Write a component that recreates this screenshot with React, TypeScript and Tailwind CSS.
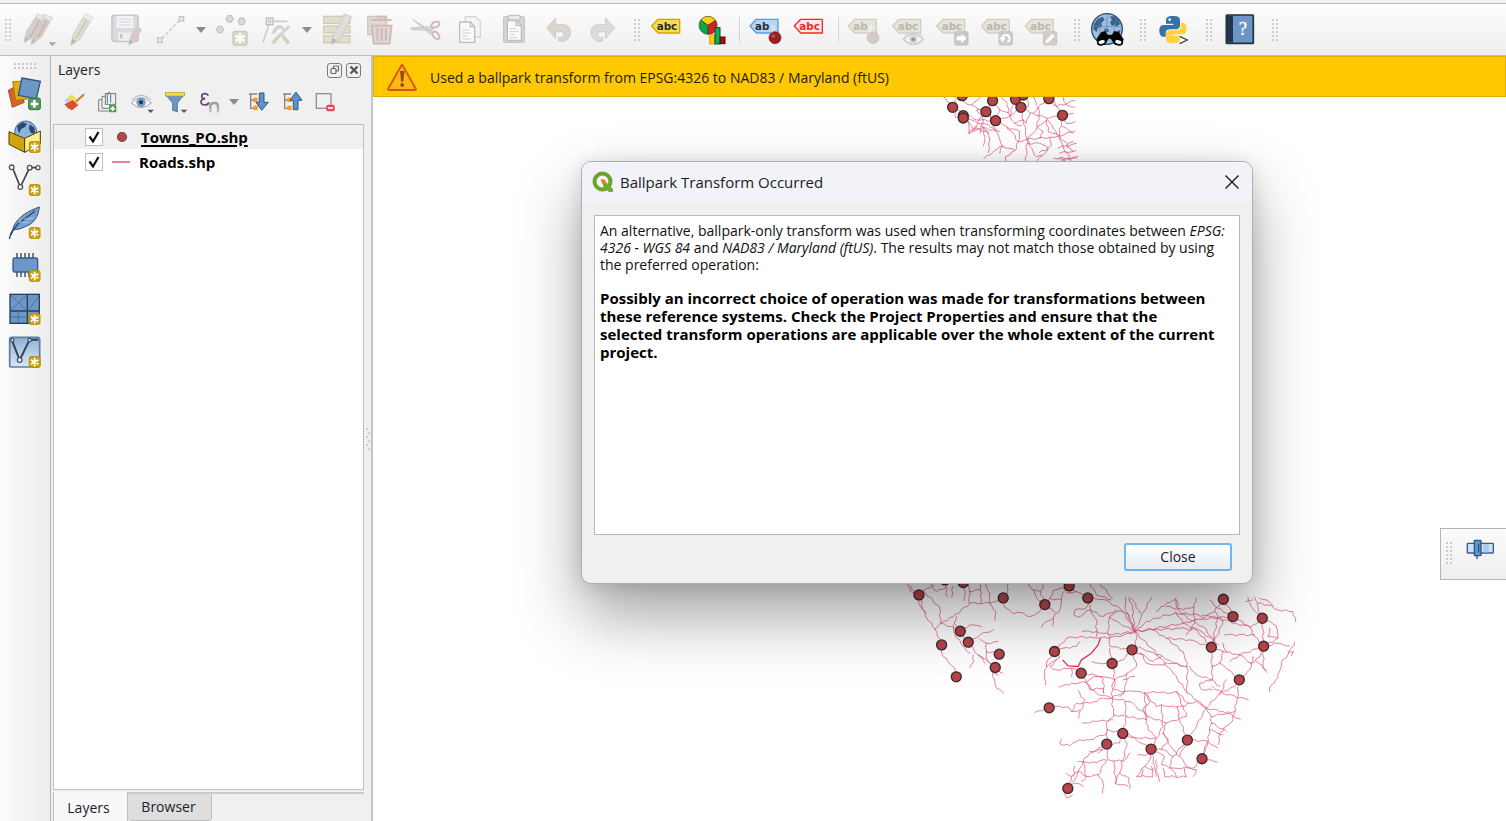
import React from "react";

type IconProps = { box: string; size?: string; children: React.ReactNode };

function Icon({ box, size = "size-9", children }: IconProps) {
  return (
    <svg viewBox={box} className={`${size} shrink-0 overflow-visible`} aria-hidden="true">
      {children}
    </svg>
  );
}

function ToolButton({ label, box, children }: { label: string; box: string; children: React.ReactNode }) {
  return (
    <button type="button" aria-label={label} className="flex h-9 w-11 shrink-0 justify-center">
      <Icon box={box}>{children}</Icon>
    </button>
  );
}

function Arrow({ label, className }: { label: string; className: string }) {
  return (
    <button type="button" aria-label={label} className={`flex shrink-0 items-center justify-center ${className}`}>
      <svg viewBox="0 0 10 6" className="h-1.5 w-2.5" aria-hidden="true">
        <path d="M0 0H10L5 6Z" fill="#8c8c8c" />
      </svg>
    </button>
  );
}

function Grip() {
  return (
    <span className="flex h-9 w-4 shrink-0 items-center justify-center">
      <svg viewBox="0 0 7 24" className="h-6 w-[7px]" aria-hidden="true">
        {[1, 5, 9, 13, 17, 21].map((y) => (
          <g key={y} fill="#cecece">
            <rect x="0" y={y} width="2" height="2" />
            <rect x="4" y={y} width="2" height="2" />
          </g>
        ))}
      </svg>
    </span>
  );
}

function Tag({ x, text = "abc", fill = "#e6e4db", stroke = "#d3d0c2", color = "#bab8ae" }: { x: number; text?: string; fill?: string; stroke?: string; color?: string }) {
  return (
    <g>
      <path d={`M${x} 78L${x + 19} 58H${x + 84}V99H${x + 19}Z`} fill={fill} stroke={stroke} strokeWidth="4" strokeLinejoin="round" />
      <text x={x + 15} y="89" fontSize="31" fontWeight="700" fontFamily="DejaVu Sans, sans-serif" fill={color}>
        {text}
      </text>
    </g>
  );
}

function Star({ x, y }: { x: number; y: number }) {
  return (
    <g transform={`translate(${x} ${y})`}>
      <rect x="2" y="2" width="32" height="32" rx="5" fill="#cfa414" stroke="#b18d0c" strokeWidth="3" />
      <path d="M18 7V29M8.500 12.500L27.500 23.500M27.500 12.500L8.500 23.500" stroke="#fff" strokeWidth="5" strokeLinecap="round" />
    </g>
  );
}

function Toolbar() {
  return (
    <header className="mt-[3px] flex h-[53px] shrink-0 items-start gap-1.5 overflow-hidden border-y border-[#bcbcbc] bg-linear-to-b from-[#fdfdfd] to-[#eeeeee] pt-2">
      <div className="flex shrink-0">
        <Grip />
        <ToolButton label="Current edits" box="60 36 108 108">
          <g stroke="#d6d2cc" strokeWidth="2" strokeLinejoin="round">
            <path d="M72 128L79 94L112 41L134 52L101 110Z" fill="#d8ccc8" />
            <path d="M93 134L99 99L131 42L158 53L124 112Z" fill="#d6cac6" />
            <path d="M112 41L134 52L130 62L106 50ZM131 42L158 53L152 64L126 52Z" fill="#e8e8e8" />
            <path d="M72 128L76 108L88 118ZM93 134L97 114L110 124Z" fill="#bdbdbd" />
            <path d="M118 62L88 115M140 62L112 114" stroke="#c5b5b2" strokeWidth="4" />
          </g>
          <path d="M146 127H169L157 139Z" fill="#a8a8a8" />
        </ToolButton>
        <ToolButton label="Toggle editing" box="192 36 108 108">
          <path d="M213 135L218 108L255 42L278 52L240 118Z" fill="#dfddd2" stroke="#d0cec5" strokeWidth="3" strokeLinejoin="round" />
          <path d="M255 42L278 52L272 62L249 52Z" fill="#ececec" />
          <path d="M260 60L228 115" stroke="#cbc8ba" strokeWidth="5" />
          <path d="M213 135L217 116L229 123Z" fill="#b8b8b8" />
        </ToolButton>
        <ToolButton label="Save layer edits" box="324 36 108 108">
          <rect x="336" y="46" width="78" height="78" rx="7" fill="#d7dbde" stroke="#c6c9cc" strokeWidth="5" />
          <path d="M350 48H400V84H350Z" fill="#f3f3f3" />
          <path d="M356 57H394M356 66H394M356 75H394" stroke="#d5d5d5" strokeWidth="3" />
          <path d="M354 98H394V122H354Z" fill="#efefef" />
          <rect x="360" y="102" width="8" height="14" fill="#c5c8ca" />
          <path d="M386 135L391 112L411 80L425 88L404 124Z" fill="#d9c8c3" stroke="#d2c4c0" strokeWidth="2" />
          <path d="M386 135L390 119L399 127Z" fill="#b5b5b5" />
        </ToolButton>
        <ToolButton label="Digitize with segment" box="456 36 108 108">
          <path d="M486 115L538 62" stroke="#cfcfcf" strokeWidth="5" strokeDasharray="10 6" />
          <rect x="473" y="114" width="13" height="13" fill="#eee" stroke="#c4c4c4" strokeWidth="4" />
          <rect x="538" y="50" width="13" height="13" fill="#eee" stroke="#c4c4c4" strokeWidth="4" />
        </ToolButton>
        <Arrow label="Segment options" className="h-9 w-[18px]" />
        <ToolButton label="Add point feature" box="642 36 108 108">
          <g fill="#d8dbdb" stroke="#c4c6c6" strokeWidth="4">
            <path d="M684 47H694L700 56L694 66H684L678 56Z" />
            <path d="M720 54H730L736 64L730 74H720L714 64Z" />
            <path d="M655 79H665L671 89L665 98H655L649 89Z" />
          </g>
          <rect x="699" y="94" width="42" height="42" rx="6" fill="#dcd8c8" stroke="#cdc9b6" strokeWidth="4" />
          <path d="M720 100V130M706 107L734 123M734 107L706 123" stroke="#fff" strokeWidth="7" />
        </ToolButton>
        <ToolButton label="Vertex tool" box="774 36 108 108">
          <path d="M820 64H862M806 76L789 127" stroke="#cdcdcd" strokeWidth="5" />
          <rect x="799" y="54" width="20" height="20" fill="#eaeaea" stroke="#bdbdbd" strokeWidth="4" />
          <circle cx="809" cy="64" r="4" fill="none" stroke="#bdbdbd" strokeWidth="3" />
          <path d="M818 100L832 82Q842 76 850 88" fill="none" stroke="#d3d3d3" strokeWidth="10" />
          <path d="M868 78L836 110M842 98L866 130" stroke="#d3d3d3" strokeWidth="9" />
          <path d="M836 109L818 130M850 112L866 130" stroke="#d6d0bc" strokeWidth="11" />
        </ToolButton>
        <Arrow label="Vertex options" className="h-9 w-[17px]" />
        <ToolButton label="Modify attributes" box="-6 36 108 108">
          <g fill="#e0decf" stroke="#cfccb9" strokeWidth="4">
            <rect x="8" y="49" width="79" height="21" />
            <rect x="8" y="78" width="79" height="21" />
            <rect x="8" y="107" width="79" height="21" />
          </g>
          <path d="M31 133L37 106L70 42L92 52L56 118Z" fill="#e1dcd8" stroke="#cfcbc7" strokeWidth="3" />
          <path d="M31 133L35 115L47 121Z" fill="#b5b5b5" />
        </ToolButton>
        <ToolButton label="Delete selected" box="126 36 108 108">
          <path d="M140 49H197V104H140Z" fill="#dddbcd" stroke="#cdcab8" strokeWidth="4" />
          <path d="M150 60H212M172 58V50H192V58" stroke="#cfbdbd" strokeWidth="6" fill="none" />
          <path d="M152 77H212L206 131H158Z" fill="#e3d4d4" stroke="#cdb8b8" strokeWidth="5" />
          <path d="M169 84V122M182 84V122M195 84V122" stroke="#cdbcbc" strokeWidth="6" />
        </ToolButton>
        <ToolButton label="Cut features" box="258 36 108 108">
          <path d="M275 58L336 98L330 104Z M270 84L338 80L334 90L272 89Z" fill="#dcdcdc" stroke="#c6c6c6" strokeWidth="3" strokeLinejoin="round" />
          <ellipse cx="343" cy="74" rx="13" ry="8" fill="none" stroke="#cfb9bb" strokeWidth="6" transform="rotate(-25 343 74)" />
          <ellipse cx="345" cy="106" rx="13" ry="8" fill="none" stroke="#cfb9bb" strokeWidth="6" transform="rotate(50 345 106)" />
        </ToolButton>
        <ToolButton label="Copy features" box="390 36 108 108">
          <path d="M433 50H464L478 64V111H433Z" fill="#f4f4f4" stroke="#d5d5d5" strokeWidth="4" />
          <path d="M416 66H448L461 80V127H416Z" fill="#fafafa" stroke="#bdbdbd" strokeWidth="4" />
          <path d="M448 66V80H461" fill="none" stroke="#bdbdbd" strokeWidth="4" />
          <path d="M424 90H444M424 99H452M424 108H440M424 117H450" stroke="#d0d0d0" strokeWidth="3" />
        </ToolButton>
        <ToolButton label="Paste features" box="522 36 108 108">
          <rect x="548" y="50" width="62" height="77" rx="5" fill="#dad7d0" stroke="#c8c5be" strokeWidth="4" />
          <path d="M559 62H586L601 76V121H559Z" fill="#fafafa" stroke="#bdbdbd" strokeWidth="4" />
          <rect x="562" y="46" width="36" height="14" rx="4" fill="#e9e9e9" stroke="#c2c2c2" strokeWidth="4" />
          <path d="M586 64V76H600" fill="none" stroke="#bdbdbd" strokeWidth="4" />
          <path d="M566 86H584M566 95H593M566 104H582M566 113H590" stroke="#d0d0d0" strokeWidth="3" />
        </ToolButton>
        <ToolButton label="Undo" box="654 36 108 108">
          <path d="M677 84L704 54V74H725C742 74 748 85 748 97C748 112 739 122 724 124L714 123L712 112C724 113 728 109 728 102C728 96 723 95 717 95H704V115Z" fill="#dcd5cf" stroke="#d2cac4" strokeWidth="3" />
        </ToolButton>
        <ToolButton label="Redo" box="786 36 108 108">
          <path d="M881 84L854 54V74H833C816 74 810 85 810 97C810 112 819 122 834 124L844 123L846 112C834 113 830 109 830 102C830 96 835 95 841 95H854V115Z" fill="#d9dcd9" stroke="#cacfcb" strokeWidth="3" />
        </ToolButton>
      </div>

      <div className="flex shrink-0">
        <Grip />
        <ToolButton label="Layer labeling options" box="27 36 108 108">
          <Tag x={35} fill="#f7dd4d" stroke="#cfa600" color="#2c2c2c" />
        </ToolButton>
        <ToolButton label="Layer diagram options" box="159 36 108 108">
          <circle cx="204" cy="76" r="27" fill="#0ca653" />
          <path d="M204 76L182 60A27 27 0 0 1 227 61Z" fill="#ffd018" />
          <path d="M204 76L227 61A27 27 0 0 1 204 103Z" fill="#d8202a" />
          <path d="M204 103V76L182 60M204 76L227 61" stroke="#4e3c12" strokeWidth="3" fill="none" />
          <circle cx="204" cy="76" r="27" fill="none" stroke="#3f4a1c" strokeWidth="2" />
          <rect x="209" y="104" width="15" height="28" fill="#ffc60b" stroke="#c98e00" strokeWidth="2" />
          <rect x="225" y="83" width="15" height="49" fill="#12ac54" stroke="#054d24" strokeWidth="3" />
          <rect x="241" y="111" width="14" height="20" fill="#a80c14" stroke="#59060a" strokeWidth="3" />
        </ToolButton>
        <span className="flex h-9 w-3 items-center justify-center">
          <span className="h-[26px] w-px bg-[#d4d4d4]" />
        </span>
        <ToolButton label="Pinned labels" box="327 36 108 108">
          <Tag x={330} text="ab" fill="#b5d5fb" stroke="#5b9be8" color="#2c2c2c" />
          <path d="M399 80V100" stroke="#dcdcdc" strokeWidth="12" strokeLinecap="round" />
          <circle cx="405" cy="113" r="18" fill="#9d1c20" stroke="#7d1518" strokeWidth="2" />
          <circle cx="400" cy="108" r="6" fill="#b84a4a" />
        </ToolButton>
        <ToolButton label="Unplaced labels" box="459 36 108 108">
          <Tag x={463} fill="#fdeaea" stroke="#fb2426" color="#fb2426" />
        </ToolButton>
        <span className="flex h-9 w-2.5 items-center justify-center">
          <span className="h-[26px] w-px bg-[#d4d4d4]" />
        </span>
        <ToolButton label="Pin labels" box="621 36 108 108">
          <Tag x={625} text="ab" />
          <path d="M692 80V100" stroke="#efefef" strokeWidth="11" strokeLinecap="round" />
          <circle cx="699" cy="113" r="18" fill="#d5c9c9" stroke="#cbbfbf" strokeWidth="2" />
        </ToolButton>
        <ToolButton label="Show or hide labels" box="753 36 108 108">
          <Tag x={758} />
          <path d="M790 118Q820 88 850 118Q820 148 790 118Z" fill="#f4f4f4" stroke="#c5c5c5" strokeWidth="4" />
          <circle cx="820" cy="118" r="11" fill="#c3cacf" />
          <circle cx="820" cy="118" r="5" fill="#909090" />
          <path d="M792 108Q820 86 848 108" fill="none" stroke="#cfcfcf" strokeWidth="3" />
        </ToolButton>
        <ToolButton label="Move label" box="885 36 108 108">
          <Tag x={890} />
          <rect x="944" y="95" width="40" height="40" rx="5" fill="#c6c9c9" stroke="#bec1c1" strokeWidth="3" />
          <path d="M950 109H964V101L980 115L964 129V121H950Z" fill="#fff" />
        </ToolButton>
        <ToolButton label="Rotate label" box="57 36 108 108">
          <Tag x={64} />
          <rect x="117" y="95" width="40" height="40" rx="5" fill="#cbcdcd" stroke="#c3c5c5" strokeWidth="3" />
          <path d="M127 115A11 11 0 1 1 142 126" fill="none" stroke="#fff" strokeWidth="6" />
          <path d="M119 112L137 114L127 128Z" fill="#fff" />
        </ToolButton>
        <ToolButton label="Change label properties" box="189 36 108 108">
          <Tag x={196} />
          <rect x="250" y="95" width="40" height="40" rx="5" fill="#d0cec5" stroke="#c8c6bc" strokeWidth="3" />
          <path d="M256 130L259 120L276 101L284 108L267 126Z" fill="#fff" />
        </ToolButton>
      </div>

      <div className="flex shrink-0">
        <Grip />
        <ToolButton label="Search locations" box="387 36 108 108">
          <circle cx="441" cy="87" r="46" fill="#9fbfe2" stroke="#2b4a69" strokeWidth="4" />
          <path d="M402 72L412 58L428 50L434 60L424 68L426 80L414 84L410 96L400 88ZM448 50L462 48L476 58L480 72L470 80L464 74L456 78L450 68L456 58ZM432 86L444 86L448 94L436 98ZM470 92L482 90L478 102Z" fill="#3a6289" />
          <path d="M396 80H486M441 42V120M410 54Q430 85 412 118M472 54Q454 85 470 118" fill="none" stroke="#5a83aa" strokeWidth="2" />
          <path d="M409 118L424 96L436 93L442 104H456L462 93L476 96L491 118L486 134H464L452 116H446L434 134H414Z" fill="#050505" />
          <ellipse cx="425" cy="126" rx="12" ry="8" fill="#fff" stroke="#050505" strokeWidth="5" transform="rotate(-12 425 126)" />
          <ellipse cx="475" cy="126" rx="12" ry="8" fill="#fff" stroke="#050505" strokeWidth="5" transform="rotate(12 475 126)" />
        </ToolButton>
      </div>
      <div className="flex shrink-0">
        <Grip />
        <ToolButton label="Python console" box="585 36 108 108">
          <path d="M638 48C622 48 618 54 618 62V71H640V75H610C601 75 598 84 598 92C598 102 602 110 611 110H617V99C617 91 623 88 630 88H648C656 88 660 83 660 76V62C660 52 654 48 638 48Z" fill="#3572a5" />
          <circle cx="629" cy="59" r="4" fill="#fff" />
          <path d="M640 130C656 130 660 124 660 116V107H638V103H668C677 103 680 94 680 86C680 76 676 68 667 68H662V79C662 87 656 91 649 91H631C623 91 618 95 618 102V116C618 126 624 130 640 130Z" fill="#ffd23f" />
          <path d="M659 109L682 120L659 131" fill="none" stroke="#fff" strokeWidth="9" />
          <path d="M659 109L682 120L659 131" fill="none" stroke="#3a3a3a" strokeWidth="4" />
        </ToolButton>
      </div>
      <div className="flex shrink-0">
        <Grip />
        <ToolButton label="Help contents" box="780 36 108 108">
          <rect x="796" y="45" width="81" height="85" rx="2" fill="#6b95c6" stroke="#20303f" strokeWidth="5" />
          <path d="M798 47H816V128H798Z" fill="#22364b" />
          <text x="846" y="106" fontSize="56" fontFamily="Liberation Serif, serif" fill="#fff" stroke="#fff" textAnchor="middle">?</text>
        </ToolButton>
      </div>
      <Grip />
    </header>
  );
}

function SideButton({ label, box, children }: { label: string; box: string; children: React.ReactNode }) {
  return (
    <button type="button" aria-label={label} className="flex h-9 w-full shrink-0 justify-center">
      <Icon box={box}>{children}</Icon>
    </button>
  );
}

function SideBar() {
  return (
    <nav aria-label="Layer tools" className="flex w-[51px] shrink-0 flex-col gap-[7px] border-r border-[#b4b4b4] bg-linear-to-r from-[#fcfcfc] to-[#ececec] pt-1">
      <svg viewBox="0 0 24 10" className="h-[10px] w-6 self-center" aria-hidden="true">
        {[0, 4, 8, 12, 16, 20].map((x) => (
          <g key={x} fill="#cacaca">
            <rect x={x + 1} y="3" width="2" height="2" />
            <rect x={x + 1} y="7" width="2" height="2" />
          </g>
        ))}
      </svg>
      <SideButton label="Data source manager" box="24 66 108 108">
        <path d="M28 106L54 92L76 142L40 157Z" fill="#d9622b" stroke="#a84a1c" strokeWidth="3" />
        <path d="M41 80L78 78L86 132L50 136Z" fill="#e2ac14" stroke="#a87e08" strokeWidth="3" />
        <path d="M69 69L124 79L112 131L58 121Z" fill="#6c97c6" stroke="#2f567d" strokeWidth="4" />
        <rect x="89" y="129" width="35" height="35" rx="5" fill="#4f9a5f" stroke="#33773f" strokeWidth="3" />
        <path d="M106 135V158M95 147H118" stroke="#fff" strokeWidth="8" />
      </SideButton>
      <SideButton label="New GeoPackage layer" box="24 195 108 108">
        <circle cx="80" cy="231" r="33" fill="#8db2dc" stroke="#456c92" strokeWidth="3" />
        <path d="M54 214L70 202L84 206L78 216L66 222L60 236ZM92 208L106 218L108 236L96 234L90 222Z" fill="#244a6d" />
        <path d="M30 230L77 250V292L30 268Z" fill="#d0a40f" stroke="#4d3c02" strokeWidth="3" strokeLinejoin="round" />
        <path d="M77 250L124 228V266L77 292Z" fill="#f8f08a" stroke="#4d3c02" strokeWidth="3" strokeLinejoin="round" />
        <Star x={89} y={258} />
      </SideButton>
      <SideButton label="New shapefile layer" box="24 324 108 108">
        <path d="M40 337L64 396L92 338H117" fill="none" stroke="#444" strokeWidth="5" />
        <g fill="#fff" stroke="#555" strokeWidth="4">
          <circle cx="38" cy="337" r="7" />
          <circle cx="64" cy="396" r="7" />
          <circle cx="92" cy="338" r="7" />
          <circle cx="117" cy="338" r="6" />
        </g>
        <Star x={89} y={387} />
      </SideButton>
      <SideButton label="New SpatiaLite layer" box="24 453 108 108">
        <path d="M36 540L44 514C58 484 88 468 121 456C119 478 110 498 90 510L62 522L44 524Z" fill="#769fce" stroke="#2f567d" strokeWidth="3" strokeLinejoin="round" />
        <path d="M31 552L36 534L56 508L108 468" fill="none" stroke="#24486a" strokeWidth="4" />
        <path d="M64 502L90 502M76 492L104 490M62 504L64 490" stroke="#aac6e6" strokeWidth="3" />
        <Star x={89} y={516} />
      </SideButton>
      <SideButton label="New temporary scratch layer" box="24 582 108 108">
        <path d="M54 594V666M66 594V666M78 594V666M90 594V666M102 594V640" stroke="#333f4a" strokeWidth="4" />
        <rect x="42" y="609" width="74" height="42" rx="5" fill="#6c97c6" stroke="#34608c" strokeWidth="4" />
        <Star x={89} y={645} />
      </SideButton>
      <SideButton label="New mesh layer" box="24 711 108 108">
        <rect x="33" y="718" width="88" height="87" fill="#6c97c6" stroke="#24415c" strokeWidth="4" />
        <path d="M85 718V805M33 768H121" fill="none" stroke="#24415c" strokeWidth="4" />
        <path d="M33 718L85 768M85 718L33 768M85 768L121 722M58 768V805M33 786H85" fill="none" stroke="#3a5f86" strokeWidth="2" />
        <Star x={89} y={774} />
      </SideButton>
      <SideButton label="New virtual layer" box="24 840 108 108">
        <defs>
          <linearGradient id="virtual-layer" x1="0" y1="0" x2="0" y2="1">
            <stop offset="0" stopColor="#8fb0d8" />
            <stop offset="1" stopColor="#dbe7f4" />
          </linearGradient>
        </defs>
        <rect x="32" y="847" width="90" height="89" rx="6" fill="url(#virtual-layer)" stroke="#5f7d9e" strokeWidth="5" />
        <path d="M38 854L62 915L92 854H118" fill="none" stroke="#304458" strokeWidth="6" />
        <g fill="#fff" stroke="#405468" strokeWidth="4">
          <circle cx="40" cy="856" r="5" />
          <circle cx="62" cy="915" r="7" />
          <circle cx="92" cy="855" r="5" />
        </g>
        <Star x={89} y={903} />
      </SideButton>
    </nav>
  );
}

function PanelButton({ label, box, children }: { label: string; box: string; children: React.ReactNode }) {
  return (
    <button type="button" aria-label={label} className="flex h-[26px] w-[34px] shrink-0 justify-center">
      <Icon box={box} size="size-[26px]">{children}</Icon>
    </button>
  );
}

function LayerRow({ id, label, active, children }: { id: string; label: string; active?: boolean; children: React.ReactNode }) {
  return (
    <li className={`flex h-6 items-center pl-[31px] ${active ? "bg-[#f0f0f0]" : ""}`}>
      <span className="relative flex size-[18px]">
        <input id={id} type="checkbox" defaultChecked className="peer size-[18px] appearance-none border border-[#c0c0c0] bg-white" />
        <svg viewBox="0 0 18 18" className="pointer-events-none absolute inset-0 hidden size-[18px] peer-checked:block" aria-hidden="true">
          <path d="M4.500 8.500L8 13.500L13.500 4" fill="none" stroke="#111" strokeWidth="2.200" />
        </svg>
      </span>
      <label htmlFor={id} className="flex items-center text-[15px] leading-6 font-bold text-black">
        {children}
        <span className={active ? "underline decoration-2 underline-offset-2" : ""}>{label}</span>
      </label>
    </li>
  );
}

function LayersPanel() {
  return (
    <aside className="flex w-[321px] shrink-0 bg-[#f0f0f0]">
      <div className="flex min-w-0 flex-1 flex-col pl-0.5">
        <div className="flex h-7 items-center justify-between pr-[3px] pl-[5px]">
          <h2 className="text-sm text-[#1c1c2c]">Layers</h2>
          <div className="flex gap-1">
            <button type="button" aria-label="Float panel" className="flex size-[15px] items-center justify-center rounded-[3px] border border-[#7a7a7a]">
              <svg viewBox="0 0 12 12" className="size-3" fill="none" stroke="#6a6a6a" strokeWidth="1.200" aria-hidden="true">
                <rect x="4.500" y="2" width="5" height="5" rx="1" />
                <rect x="2" y="4.500" width="5" height="5" rx="1" fill="#f0f0f0" />
              </svg>
            </button>
            <button type="button" aria-label="Close panel" className="flex size-[15px] items-center justify-center rounded-[3px] border border-[#7a7a7a]">
              <svg viewBox="0 0 12 12" className="size-3" stroke="#5a5a5a" strokeWidth="2.400" aria-hidden="true">
                <path d="M2.500 2.500L9.500 9.500M9.500 2.500L2.500 9.500" />
              </svg>
            </button>
          </div>
        </div>
        <div className="flex h-10 pt-[5px] pl-1">
          <PanelButton label="Open layer styling panel" box="33 102 78 78">
            <path d="M43 136L60 122L72 132L54 146Z" fill="#b4d2f4" />
            <path d="M52 128L66 118L86 138L70 146Z" fill="#f7dc4a" />
            <path d="M43 148L56 142L70 134L86 150L66 166L54 160Z" fill="#d4532c" />
            <path d="M70 132L86 148" stroke="#f2dca0" strokeWidth="6" />
            <path d="M80 138L100 120" stroke="#c9872e" strokeWidth="7" strokeLinecap="round" />
          </PanelButton>
          <PanelButton label="Add group" box="135 102 78 78">
            <g fill="none" stroke="#747c78" strokeWidth="3">
              <path d="M146 168V134H156M146 168H176" />
              <path d="M156 156V124H166M156 156V160H176" />
              <rect x="166" y="116" width="31" height="32" />
            </g>
            <path d="M172 145V118Q177 106 182 118V142" fill="none" stroke="#48749c" strokeWidth="3" />
            <rect x="177" y="150" width="22" height="22" rx="3" fill="#4b9a57" />
            <path d="M188 154V168M181 161H195" stroke="#fff" strokeWidth="5" />
          </PanelButton>
          <PanelButton label="Manage map themes" box="237 102 78 78">
            <path d="M244 144Q274 112 304 144Q274 172 244 144Z" fill="#fafafa" stroke="#a0a0a0" strokeWidth="3" />
            <path d="M246 134Q274 108 302 134" fill="none" stroke="#b0b0b0" strokeWidth="3" />
            <circle cx="273" cy="142" r="14" fill="#6f9fca" />
            <circle cx="273" cy="142" r="6" fill="#1e3242" />
            <path d="M292 164H312L302 174Z" fill="#555" />
          </PanelButton>
          <PanelButton label="Filter legend" box="339 102 78 78">
            <path d="M346 118L368 144V166L382 170V144L403 118Z" fill="#6c97c6" stroke="#52799f" strokeWidth="3" />
            <rect x="346" y="112" width="57" height="11" fill="#f3e13c" stroke="#a79a2a" strokeWidth="2" />
            <path d="M392 164H412L402 174Z" fill="#555" />
          </PanelButton>
          <PanelButton label="Filter by expression" box="441 102 78 78">
            <path d="M475 122Q472 115 464 116Q455 117 455 124Q456 131 466 131Q453 132 453 141Q454 150 464 150Q474 150 477 142" fill="none" stroke="#6b3f7e" strokeWidth="5" />
            <path d="M481 172V153Q482 144 493 144Q504 144 504 153V172" fill="none" stroke="#a0a0a0" strokeWidth="7" />
            <path d="M481 160V172M504 160V172" stroke="#dadada" strokeWidth="3" />
          </PanelButton>
          <Arrow label="Expression filter options" className="h-[26px] w-3.5" />
          <PanelButton label="Expand all" box="585 102 78 78">
            <path d="M597 117H622M602 119V160H612M602 135H612" fill="none" stroke="#858585" strokeWidth="4" />
            <rect x="610" y="128" width="13" height="13" fill="#fb9a1f" />
            <rect x="610" y="152" width="13" height="13" fill="#fb9a1f" />
            <path d="M628 114H642V142H655L635 166L618 142H628Z" fill="#5e92c8" stroke="#2f5680" strokeWidth="3" />
          </PanelButton>
          <PanelButton label="Collapse all" box="687 102 78 78">
            <path d="M699 117H724M704 119V160H714M704 135H714" fill="none" stroke="#858585" strokeWidth="4" />
            <rect x="712" y="128" width="13" height="13" fill="#fb9a1f" />
            <rect x="712" y="152" width="13" height="13" fill="#fb9a1f" />
            <path d="M730 164H744V136H756L738 111L720 136H730Z" fill="#5e92c8" stroke="#2f5680" strokeWidth="3" />
          </PanelButton>
          <PanelButton label="Remove layer" box="789 102 78 78">
            <rect x="799" y="116" width="44" height="44" fill="#f1f1f1" stroke="#909090" strokeWidth="4" />
            <rect x="829" y="149" width="25" height="20" rx="5" fill="#ec4552" />
            <path d="M834 159H849" stroke="#fff" strokeWidth="5" />
          </PanelButton>
        </div>
        <ul className="flex flex-1 flex-col gap-px border border-[#bfbfbf] bg-white">
          <LayerRow id="towns" label="Towns_PO.shp" active>
            <span className="flex w-[38px] justify-center">
              <svg viewBox="0 0 12 12" className="size-3" aria-hidden="true">
                <circle cx="6" cy="6" r="4.500" fill="#b8444a" stroke="#6b4a4a" strokeWidth="1.200" />
              </svg>
            </span>
          </LayerRow>
          <LayerRow id="roads" label="Roads.shp">
            <span className="flex w-9 justify-center">
              <span className="h-0.5 w-[18px] bg-[#ee7d98]" />
            </span>
          </LayerRow>
        </ul>
        <div className="mt-0.5 flex h-[29px] items-start border-t-2 border-[#c9c9c9] text-sm text-[#1c1c2c]" role="tablist">
          <button type="button" role="tab" aria-selected="true" className="-mt-0.5 h-8 w-[75px] border-x border-[#bdbdbd] bg-[#f8f8f8] pr-1">
            Layers
          </button>
          <button type="button" role="tab" aria-selected="false" className="h-[27px] w-[84px] rounded-b-sm border-r border-b border-[#bdbdbd] bg-[#dedede] pr-0.5">
            Browser
          </button>
        </div>
      </div>
      <div className="flex w-2 items-center justify-center border-r border-[#c4c4c4]">
        <svg viewBox="0 0 4 24" className="h-6 w-1" aria-hidden="true">
          {[1, 5, 9, 13, 17, 21].map((y) => (
            <rect key={y} x={y % 8 === 1 ? 0 : 2} y={y} width="2" height="2" fill="#cdcdcd" />
          ))}
        </svg>
      </div>
    </aside>
  );
}

const northRoads = [
  "M125 18L150 40L190 70L205 95L220 120L250 112L290 125L300 150L308 168L345 182L355 155",
  "M308 168L280 185L252 206M345 182L330 195L316 200L318 215M308 168L300 190",
  "M160 15L175 30L215 45L258 65L287 92L320 110L360 125L355 155L382 148",
  "M205 95L207 132L235 118L262 125L270 150L265 188M250 112L255 140L250 168",
  "M190 70L230 90L287 92L300 60L278 32L290 15M215 45L240 20M258 65L235 95L220 120",
  "M230 60L250 90L240 130M278 32L258 65L230 60M200 85L235 100L265 105L290 125M165 30L165 80L190 84",
  "M287 92L330 78L363 52L347 28M300 60L325 68L330 78L345 100L365 108M325 68L320 35L305 20",
  "M363 52L370 90L382 148L378 215M382 148L450 142L478 138L525 122M363 52L400 70L440 85L488 76",
  "M400 70L415 50L447 26L430 15M415 50L418 75L412 110L430 125L420 145M382 148L400 130L412 110L440 90L445 125L478 138",
  "M447 26L470 50L488 76L520 70M470 50L525 32M488 76L478 138L490 170L515 215M440 85L460 115L478 138",
  "M382 148L400 185L410 200L425 195M382 160L420 160L445 175L430 195L410 215L400 215M450 142L455 165L445 175L418 188",
  "M478 138L520 185M500 172L530 160M475 175L520 155M462 205L530 205M480 190L528 182M470 215L535 200M475 205L500 215",
  "M370 90L345 100M380 20L385 50L363 52M392 70L378 100L370 90M320 110L340 130L355 155M488 76L500 100L525 95M488 110L520 130",
  "M490 20L500 45L525 52M460 20L470 50M400 20L410 45M340 40L330 78M270 70L280 110L300 125M230 110L205 130M245 105L268 130",
];

const southRoads = [
  "M52 190L62 215L90 235L105 285L135 328L155 370M86 225L100 212L150 265L152 310L135 328M62 200L75 215M85 240L95 265L110 280",
  "M152 310L190 290L240 250L300 250L340 234M100 212L130 195M118 190L140 215L170 200",
  "M152 310L185 320L210 335L235 368L265 405L300 430L316 443L308 470L320 505L340 520M190 315L195 345L225 385L240 400",
  "M155 385L160 410L190 440L199 470M235 190L240 215L238 250M220 190L225 215L222 242M270 190L275 220L272 250",
  "M285 190L300 220L300 250L318 275L315 302M165 190L172 230M188 200L185 232M238 215L270 210M200 290L192 310L205 330",
  "M210 335L240 315L275 320M235 368L270 345L310 330M270 358L290 370L325 365M290 370L290 395L328 402M290 395L292 420L316 443",
  "M250 405L252 425L240 443M265 405L278 412L285 430M316 443L338 460M305 455L325 465",
  "M340 234L345 262L370 282L395 278L420 290L450 275L465 255M356 190L352 220L340 234M415 190L430 210L452 215L465 255",
  "M452 215L460 195M430 210L440 235L465 255M465 255L480 235L490 212L538 200M480 235L515 240L518 220L530 205M515 240L512 265L490 295L488 318M490 295L470 305L455 322M465 255L495 278",
  "M538 200L560 215L594 234L595 255L580 268L555 270L552 285L565 292L600 270L640 290L680 270M594 234L640 238L690 265L720 290L735 335",
  "M600 190L620 225L665 240M630 190L668 235M600 255L605 280L620 300L620 350M560 215L530 218",
  "M735 335L705 265L707 232M735 335L728 265L718 232M735 335L755 290L785 232M725 235L752 280M735 335L770 305L830 285L880 280L965 290L1040 310L1082 322",
  "M735 335L800 325L880 310L930 298L1030 290M735 335L660 345L620 335L578 335M735 335L690 310L660 290L655 330L662 380L727 390",
  "M735 335L700 275L680 275L660 290M735 335L740 345L738 375L727 390L740 440L712 460L705 515L690 530M735 335L690 350L620 355L570 350L530 355L494 395",
  "M735 335L800 400L850 460L895 520L950 565M735 335L790 330L830 355L900 360L965 382M830 355L880 395L893 430L892 520",
  "M790 330L870 325L920 330L965 382M800 275L830 250L860 240L870 275L900 300L940 320L985 375M858 235L860 262M858 275L880 310L935 335L975 365",
  "M918 235L912 262L915 310L890 345M912 262L880 270L830 260M935 295L975 275L1000 238M960 240L985 265L1030 290M975 275L985 290L965 382",
  "M1000 238L1018 262L1030 290L1082 322L1120 295L1160 318L1165 355L1122 380M1075 232L1085 260L1118 295M1095 232L1105 262L1118 295L1122 380L1120 440L1132 458",
  "M1082 322L1095 350L1122 380M1130 240L1110 235M1105 250L1135 255L1165 270L1210 275L1218 305M1130 240L1150 258M1068 245L1090 240",
  "M1215 368L1195 405L1175 430L1165 475L1145 495L1140 515M1195 395L1212 395L1205 408M1122 380L1165 370L1200 378M1140 325L1135 350L1165 355",
  "M965 382L1000 310L990 290M965 382L1000 395L1050 405L1122 380M1050 405L1085 430L1110 412L1122 380M965 382L968 480L990 500M1000 395L990 430L1015 450L1049 480",
  "M1005 345L1095 345M1000 370L1010 395M1085 430L1090 410M1049 480L1080 450L1085 430M1100 425L1130 450M1020 425L1050 405M990 430L965 440",
  "M968 480L930 490L935 508L968 510M968 480L920 465L900 440M1049 480L1035 500L990 520L950 565M968 500L1000 520L1076 540M1010 480L990 525M1049 480L1042 540L1030 600L990 640L985 675",
  "M950 565L1000 575L1052 598M950 565L910 635L893 660M950 565L965 590L960 640L937 717M965 590L1035 575M965 610L1010 635M960 630L1000 645M937 717L955 665L893 660M955 665L985 685M937 717L983 727",
  "M950 565L920 545L895 550L860 515L830 520L790 515L760 520L740 515L705 515L665 535L620 520L590 490L575 460M895 550L880 560L890 590L830 610L820 640M860 515L880 560L840 560L815 555",
  "M740 400L760 405L770 430L800 435L850 430L893 440M745 380L780 395L820 410L850 430L880 440M750 400L790 425L815 410",
  "M494 395L470 430L465 465L466 495M494 395L520 385L560 380L570 365M494 395L510 412L480 440L500 450L545 445L574 460L640 470L675 480L712 460M470 440L500 420M545 445L545 470",
  "M508 502L545 490L590 488L615 470L640 475L642 520M590 488L600 510L640 505L642 520M565 512L572 530L585 540L575 570L545 575L530 560L478 562L435 578M545 575L560 550L600 550L640 535L665 535L720 545L775 590L830 610",
  "M567 595L570 575M667 430L675 460L665 520L672 590L650 610L652 672M667 430L660 385M607 425L640 432L667 430L700 420L727 390M675 480L672 510L705 515M700 480L735 470",
  "M672 585L710 590L770 600L765 520M765 520L800 560L815 555L820 620L800 655L745 655L700 640M705 545L710 590L700 640L650 630M770 600L775 630L800 655L784 688M765 520L780 545L760 570L770 600",
  "M578 610L620 605L670 600M515 658L510 672L540 678L570 660L600 660L652 640M652 672L620 690L600 700L580 725L565 755L555 780L534 806M652 672L655 720L700 725L720 700M700 640L690 670L655 675M700 640L712 672L700 720L690 760L675 790L715 800M700 640L740 660L784 688",
  "M600 695L640 690L625 700M565 725L600 730L650 720L625 765L590 770L565 755M625 765L640 790L638 820M580 725L590 770L575 785M534 806L525 820L530 835L548 825M534 806L545 770L530 760M534 806L555 790L580 800M545 770L565 755M555 740L550 770",
  "M690 760L718 775L720 808M672 725L678 790M784 688L780 720L765 740L740 770L790 770L785 740M784 688L795 740L810 785M784 688L820 690L850 710L893 660M784 688L825 710L815 735L850 745L910 745L937 717M745 705L784 705",
  "M820 640L850 690L870 710L893 660M820 640L835 660L815 690M862 560L870 600L893 660M820 745L825 770L890 772L885 745M850 710L840 740L860 770M870 710L890 740L920 750L910 770M800 720L800 770M765 740L790 750M760 750L755 770",
];

const highlightedRoad = "M632 355L625 375L605 400L575 420L565 440L535 438L518 420";

const northTowns = [[187, 17], [158, 52], [190, 77], [190, 84], [278, 32], [258, 65], [287, 92], [347, 28], [370, 15], [363, 52], [447, 26], [488, 76]];

const southTowns = [
  [165, 180], [220, 188], [87, 225], [340, 234], [465, 254], [538, 198], [594, 234], [1001, 238], [1030, 290], [1118, 295],
  [211, 334], [235, 367], [155, 375], [328, 403], [316, 443], [199, 471], [494, 395], [574, 460], [667, 431], [727, 390],
  [965, 382], [1122, 379], [1049, 480], [478, 564], [699, 641], [651, 673], [784, 688], [893, 661], [937, 717], [534, 806],
];

// Breaks the straight runs between junctions into short legs with a slight sideways drift.
function meander(d: string) {
  return d
    .split("M")
    .filter(Boolean)
    .map((run) => {
      const points = run.split("L").map((pair) => pair.trim().split(" ").map(Number));
      let out = `M${points[0][0]} ${points[0][1]}`;
      for (let i = 1; i < points.length; i += 1) {
        const [ax, ay] = points[i - 1];
        const [bx, by] = points[i];
        const length = Math.hypot(bx - ax, by - ay) || 1;
        const legs = Math.max(1, Math.round(length / 11));
        for (let k = 1; k < legs; k += 1) {
          const t = k / legs;
          const drift = Math.sin(ax * 1.7 + ay * 2.3 + k * 2.1) * 3;
          const x = ax + (bx - ax) * t - ((by - ay) / length) * drift;
          const y = ay + (by - ay) * t + ((bx - ax) / length) * drift;
          out += `L${x.toFixed(1)} ${y.toFixed(1)}`;
        }
        out += `L${bx} ${by}`;
      }
      return out;
    })
    .join("");
}

function Cluster({ transform, roads, towns }: { transform: string; roads: string[]; towns: number[][] }) {
  return (
    <g transform={transform}>
      <g fill="none" stroke="#e0507a" strokeOpacity="0.700" strokeWidth="3" strokeLinejoin="round" strokeLinecap="round">
        {roads.map((d) => (
          <path key={d} d={meander(d)} />
        ))}
      </g>
      {towns.map(([x, y]) => (
        <circle key={`${x}-${y}`} cx={x} cy={y} r="15" fill="#b8444a" stroke="#3b2c2c" strokeWidth="4" />
      ))}
    </g>
  );
}

function MapCanvas() {
  return (
    <section aria-label="Map canvas" className="min-h-0 flex-1 overflow-hidden bg-white">
      <svg viewBox="373 97 1133 724" className="h-[724px] w-[1133px] max-w-none" role="img" aria-label="Towns and roads">
        <Cluster transform="translate(900 90) scale(0.333)" roads={northRoads} towns={northTowns} />
        <Cluster transform="translate(890 520) scale(0.333)" roads={southRoads} towns={southTowns} />
        <path d={highlightedRoad} transform="translate(890 520) scale(0.333)" fill="none" stroke="#e2335f" strokeWidth="4" strokeLinejoin="round" />
      </svg>
    </section>
  );
}

function Dialog() {
  return (
    <div
      role="dialog"
      aria-labelledby="dialog-title"
      className="absolute top-[161px] left-[581px] flex h-[423px] w-[672px] flex-col overflow-hidden rounded-[10px] border border-[#b0b0b0] bg-[#f0f0f0] shadow-[0_32px_64px_rgba(0,0,0,0.36),0_2px_20px_rgba(0,0,0,0.13)]"
    >
      <div className="flex h-10 shrink-0 items-center bg-[#f1f3f9] pr-3 pl-[10px]">
        <svg viewBox="0 0 22 22" className="size-[22px]" aria-hidden="true">
          <circle cx="10.500" cy="10.500" r="8" fill="none" stroke="#6ba32b" strokeWidth="4" />
          <path d="M11 11.500H14.500L21 18V21H17L11 15Z" fill="#74ab2f" />
          <path d="M8.500 8.500H12.500L14 11L13 13H10.500Z" fill="#ee7913" />
        </svg>
        <h1 id="dialog-title" className="ml-1.5 flex-1 text-[15px] text-[#1b1b1b]">Ballpark Transform Occurred</h1>
        <button type="button" aria-label="Close dialog" className="flex size-4 items-center justify-center">
          <svg viewBox="0 0 14 14" className="size-3.5" stroke="#1b1b1b" strokeWidth="1.400" aria-hidden="true">
            <path d="M0.500 0.500L13.500 13.500M13.500 0.500L0.500 13.500" />
          </svg>
        </button>
      </div>
      <div className="mx-3 mt-[13px] flex-1 overflow-hidden border border-[#b9b9b9] bg-white px-[5px] pt-1.5 text-sm leading-[17px] whitespace-nowrap text-[#101010]">
        <p>
          An alternative, ballpark-only transform was used when transforming coordinates between <i>EPSG:</i>
          <br />
          <i>4326 - WGS 84</i> and <i>NAD83 / Maryland (ftUS)</i>. The results may not match those obtained by using
          <br />
          the preferred operation:
        </p>
        <p className="mt-4 text-[15px] leading-[18px] font-bold text-black">
          Possibly an incorrect choice of operation was made for transformations between
          <br />
          these reference systems. Check the Project Properties and ensure that the
          <br />
          selected transform operations are applicable over the whole extent of the current
          <br />
          project.
        </p>
      </div>
      <div className="flex h-12 shrink-0 justify-end pt-2 pr-5">
        <button type="button" className="h-7 w-[108px] rounded-[3px] border-2 border-[#6fb5ee] bg-linear-to-b from-white to-[#e6ebf0] text-sm leading-6 text-[#1c1c2c]">
          Close
        </button>
      </div>
    </div>
  );
}

export default function App() {
  return (
    <div className="relative flex h-screen flex-col overflow-hidden bg-[#f0f0f0] font-['Open_Sans',sans-serif]">
      <Toolbar />
      <div className="flex min-h-0 flex-1">
        <SideBar />
        <LayersPanel />
        <main className="flex min-w-0 flex-1 flex-col border-l border-[#c4c4c4]">
          <div role="status" className="flex h-[41px] shrink-0 items-center border border-[#dfae00] bg-[#ffc800] pl-3 text-sm text-[#221c00]">
            <svg viewBox="0 0 32 30" className="mr-3 h-[30px] w-8" aria-hidden="true">
              <path d="M16 2.500L30 27Q30 28 29 28H3Q2 28 2 27Z" fill="#fbb813" stroke="#d9560f" strokeWidth="1.800" strokeLinejoin="round" />
              <path d="M14 9H18.500L17.300 19.500H15Z" fill="#9a4a10" />
              <circle cx="16.200" cy="23" r="1.900" fill="#9a4a10" />
            </svg>
            <p className="pt-0.5">Used a ballpark transform from EPSG:4326 to NAD83 / Maryland (ftUS)</p>
          </div>
          <MapCanvas />
        </main>
      </div>
      <Dialog />
      <div className="absolute top-[528px] right-0 flex h-[52px] w-[66px] items-start border border-r-0 border-[#b4b4b4] bg-linear-to-b from-[#fbfbfb] to-[#eeeeee] pt-1.5">
        <Grip />
        <button type="button" aria-label="Diagnostics" className="ml-2 flex h-7 w-8 items-center justify-center">
          <svg viewBox="198 114 90 66" className="h-[22px] w-[30px] overflow-visible" aria-hidden="true">
            <rect x="202" y="130" width="78" height="29" rx="2" fill="#cfe2f5" stroke="#355f8a" strokeWidth="4" />
            <path d="M250 132H266V157H250Z" fill="#a9cbee" />
            <rect x="223" y="121" width="20" height="46" rx="2" fill="#5f93cb" stroke="#2f5680" strokeWidth="4" />
            <path d="M236 132V157M231 166V177" stroke="#2f5680" strokeWidth="4" />
          </svg>
        </button>
      </div>
    </div>
  );
}
